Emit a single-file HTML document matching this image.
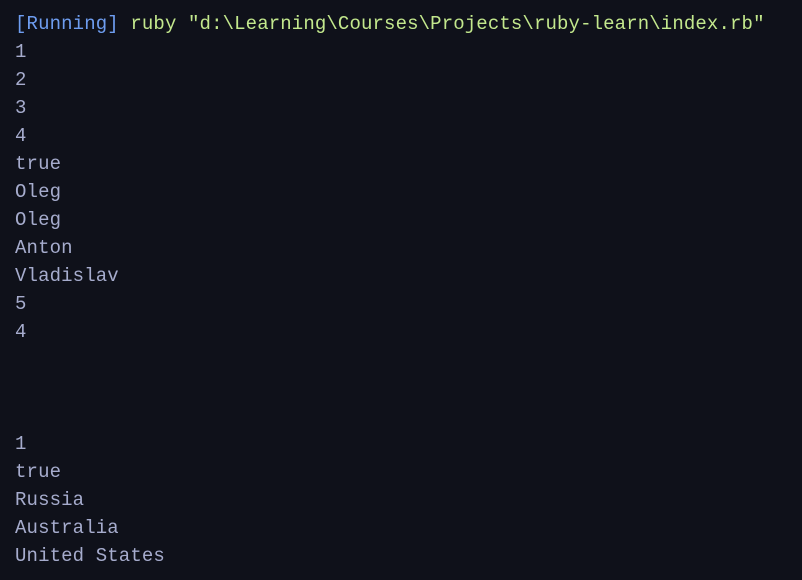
<!DOCTYPE html>
<html><head><style>
html,body{margin:0;padding:0;background:#0f111a;width:802px;height:580px;overflow:hidden}
pre{margin:0;position:absolute;left:15px;top:10px;font-family:"Liberation Mono",monospace;font-size:19px;letter-spacing:0.13px;line-height:28px;color:#a6accd}
.b{color:#6e9df0}.g{color:#c3e88d}
</style></head><body>
<pre><span class="b">[Running]</span> <span class="g">ruby "d:\Learning\Courses\Projects\ruby-learn\index.rb"</span>
1
2
3
4
true
Oleg
Oleg
Anton
Vladislav
5
4



1
true
Russia
Australia
United States</pre>
</body></html>
